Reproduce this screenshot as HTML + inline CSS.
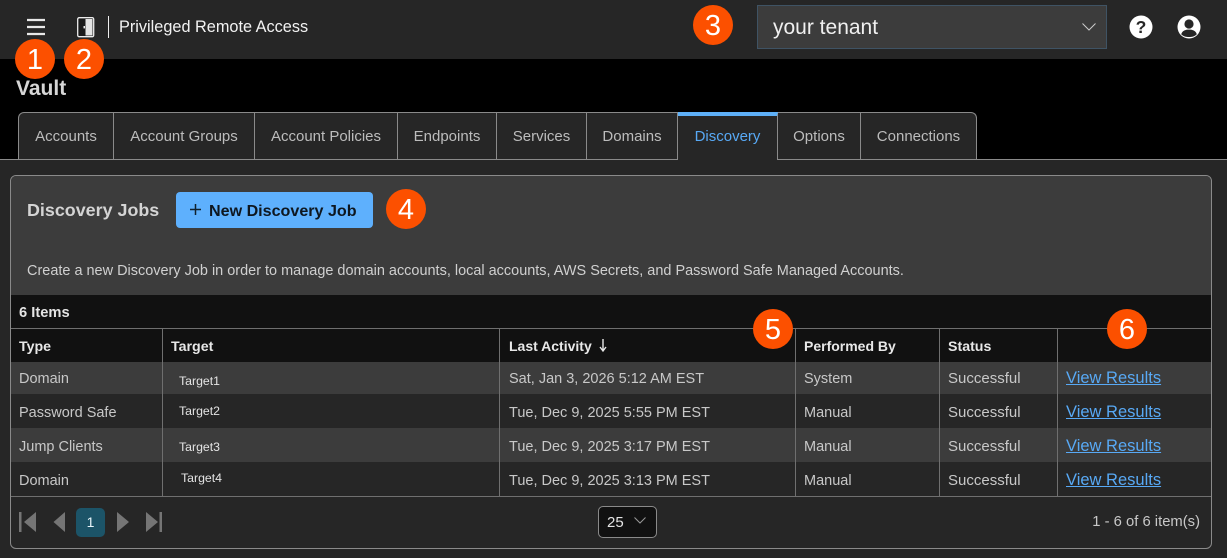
<!DOCTYPE html>
<html><head><meta charset="utf-8">
<style>
html,body{margin:0;padding:0;background:#262626}
#p{position:relative;width:1227px;height:558px;overflow:hidden;background:#262626;font-family:"Liberation Sans",sans-serif;font-size:14.5px;color:#c8c8c8}
#p div,#p a,#p svg{position:absolute}
.t{white-space:nowrap;line-height:18px}
.b{width:40px;height:40px;border-radius:50%;background:#fc5000;color:#fff;font-size:29px;line-height:43px;text-align:center}
.tab{top:112px;height:47px;box-sizing:border-box;border-top:1px solid #8a8a8a;border-right:1px solid #8a8a8a;background:#262626;color:#bcbcbc;line-height:47px;text-align:center;font-size:15px}
.vl{width:1px;background:#6f6f6f;top:329px;height:167px}
.th{font-weight:bold;color:#e8e8e8;font-size:14.2px}
.tg{color:#e4e4e4;font-size:12.3px}
.s{font-size:15px}
a.l{color:#58a9f5;text-decoration:underline;font-size:16.5px;left:1066px;white-space:nowrap;line-height:18px}
</style></head><body><div id="p">
<div style="left:0;top:0;width:1227px;height:59px;background:#262626"></div>
<div style="left:0;top:59px;width:1227px;height:100px;background:#000"></div>

<svg style="left:26px;top:18px" width="20" height="18"><path d="M1 2H19M1 9H19M1 16H19" stroke="#e8e8e8" stroke-width="2.2" fill="none"/></svg>
<svg style="left:76px;top:16px" width="20" height="22"><rect x="1.700" y="1.700" width="16" height="19" rx="1.500" fill="#1a1a1a" stroke="#ececec" stroke-width="1.300"/><path d="M9.500 3H16.500V19.500H9.500Z" fill="#e4e4e4"/><rect x="7.500" y="10" width="1.500" height="2.400" fill="#eee"/></svg>
<div style="left:108px;top:16px;width:1px;height:22px;background:#eee"></div>
<div class="t" style="left:119px;top:18px;color:#f2f2f2;font-size:16.3px">Privileged Remote Access</div>

<div style="left:757px;top:5px;width:350px;height:44px;box-sizing:border-box;background:#3c3c3c;border:1px solid #3f5364"></div>
<div class="t" style="left:773px;top:19px;color:#f0f0f0;font-size:21px">your tenant</div>
<svg style="left:1081px;top:21px" width="16" height="12"><path d="M1.500 2.500L8 9L14.500 2.500" stroke="#ccc" stroke-width="1" fill="none"/></svg>
<svg style="left:1129px;top:15px" width="24" height="24"><circle cx="12" cy="12" r="11.500" fill="#fff"/><text x="12" y="18.200" text-anchor="middle" font-family="Liberation Sans" font-weight="bold" font-size="17.500" fill="#262626">?</text></svg>
<svg style="left:1177px;top:15px" width="24" height="24"><circle cx="12" cy="12" r="11.500" fill="#fff"/><circle cx="12" cy="9" r="4.600" fill="#262626"/><path d="M4.200 19.200C5.500 15.400 8.500 14.600 12 14.600S18.500 15.400 19.800 19.200C17.500 21.400 15 22 12 22S6.500 21.400 4.200 19.200Z" fill="#262626"/></svg>

<div class="t" style="left:16px;top:78px;color:#d6d6d6;font-size:21px;font-weight:bold;line-height:22px">Vault</div>

<div style="left:0;top:159px;width:1227px;height:1px;background:#8a8a8a"></div>
<div class="tab" style="left:18px;width:96px;border-left:1px solid #8a8a8a;border-top-left-radius:6px;line-height:48px">Accounts</div>
<div class="tab" style="left:114px;width:141px;line-height:48px">Account Groups</div>
<div class="tab" style="left:255px;width:143px;line-height:48px">Account Policies</div>
<div class="tab" style="left:398px;width:99px;line-height:48px">Endpoints</div>
<div class="tab" style="left:497px;width:90px;line-height:48px">Services</div>
<div class="tab" style="left:587px;width:91px;line-height:48px">Domains</div>
<div class="tab" style="left:678px;width:100px;height:48px;color:#58a9f5;border-top:4px solid #5eb0f7;line-height:42px">Discovery</div>
<div class="tab" style="left:778px;width:83px;line-height:48px">Options</div>
<div class="tab" style="left:861px;width:116px;border-top-right-radius:6px;line-height:48px">Connections</div>

<div style="left:10px;top:175px;width:1202px;height:374px;box-sizing:border-box;border:1px solid #8a8a8a;border-radius:6px;background:#262626"></div>
<div style="left:11px;top:176px;width:1200px;height:119px;background:#3c3c3c;border-radius:5px 5px 0 0"></div>
<div class="t" style="left:27px;top:200px;color:#d4d4d4;font-size:17.900px;font-weight:bold;line-height:20px">Discovery Jobs</div>
<div style="left:176px;top:192px;width:197px;height:36px;background:#5eb0fd;border-radius:4px"></div>
<svg style="left:189px;top:203px" width="13" height="13"><path d="M6.500 1V12M1 6.500H12" stroke="#10202c" stroke-width="1.500"/></svg>
<div class="t" style="left:209px;top:202px;color:#0e1720;font-size:16.100px;font-weight:bold">New Discovery Job</div>
<div class="t" style="left:27px;top:262px;color:#d0d0d0;font-size:14.470px">Create a new Discovery Job in order to manage domain accounts, local accounts, AWS Secrets, and Password Safe Managed Accounts.</div>

<div style="left:11px;top:295px;width:1200px;height:67px;background:#111"></div>
<div style="left:11px;top:328px;width:1200px;height:1px;background:#6f6f6f"></div>
<div class="t" style="left:19px;top:304px;font-weight:bold;color:#e4e4e4;font-size:14.700px">6 Items</div>

<div style="left:11px;top:362px;width:1200px;height:32px;background:#3c3c3c"></div>
<div style="left:11px;top:394px;width:1200px;height:34px;background:#262626"></div>
<div style="left:11px;top:428px;width:1200px;height:34px;background:#3c3c3c"></div>
<div style="left:11px;top:462px;width:1200px;height:34px;background:#262626"></div>
<div style="left:11px;top:496px;width:1200px;height:1px;background:#6f6f6f"></div>
<div class="vl" style="left:162px"></div><div class="vl" style="left:499px"></div><div class="vl" style="left:795px"></div><div class="vl" style="left:939px"></div><div class="vl" style="left:1057px"></div>

<div class="t th" style="left:19px;top:338px">Type</div>
<div class="t th" style="left:171px;top:338px">Target</div>
<div class="t th" style="left:509px;top:337px;font-size:14px">Last Activity</div>
<svg style="left:598px;top:338px" width="10" height="15"><path d="M5 1V12M2 9L5 13L8 9" stroke="#e8e8e8" stroke-width="1.400" fill="none"/></svg>
<div class="t th" style="left:804px;top:337px;font-size:14px">Performed By</div>
<div class="t th" style="left:948px;top:338px">Status</div>

<div class="t" style="left:19px;top:370px">Domain</div><div class="t tg" style="left:179px;top:372px">Target1</div><div class="t" style="left:509px;top:370px">Sat, Jan 3, 2026 5:12 AM EST</div><div class="t" style="left:804px;top:370px">System</div><div class="t s" style="left:948px;top:370px">Successful</div><a class="l" style="top:369px">View Results</a>

<div class="t" style="left:19px;top:404px">Password Safe</div><div class="t tg" style="left:179px;top:402px">Target2</div><div class="t" style="left:509px;top:404px">Tue, Dec 9, 2025 5:55 PM EST</div><div class="t" style="left:804px;top:404px">Manual</div><div class="t s" style="left:948px;top:404px">Successful</div><a class="l" style="top:403px">View Results</a>

<div class="t" style="left:19px;top:438px">Jump Clients</div><div class="t tg" style="left:179px;top:438px">Target3</div><div class="t" style="left:509px;top:438px">Tue, Dec 9, 2025 3:17 PM EST</div><div class="t" style="left:804px;top:438px">Manual</div><div class="t s" style="left:948px;top:438px">Successful</div><a class="l" style="top:437px">View Results</a>

<div class="t" style="left:19px;top:472px">Domain</div><div class="t tg" style="left:181px;top:469px">Target4</div><div class="t" style="left:509px;top:472px">Tue, Dec 9, 2025 3:13 PM EST</div><div class="t" style="left:804px;top:472px">Manual</div><div class="t s" style="left:948px;top:472px">Successful</div><a class="l" style="top:471px">View Results</a>

<svg style="left:18px;top:510px" width="150" height="24" fill="#757575"><rect x="1" y="2" width="2.500" height="20"/><path d="M18 2V22L6 12Z"/><path d="M47 2V22L35.500 12Z"/><path d="M99 2V22L111 12Z"/><path d="M128 2V22L140 12Z"/><rect x="141.500" y="2" width="2.500" height="20"/></svg>
<div style="left:76px;top:508px;width:29px;height:29px;border-radius:5px;background:#1c5468;color:#e8f4fa;text-align:center;line-height:29px;font-size:14px">1</div>

<div style="left:598px;top:506px;width:59px;height:32px;box-sizing:border-box;border:1px solid #8a8a8a;border-radius:5px;background:#111"></div>
<div class="t" style="left:607px;top:514px;color:#e4e4e4;font-size:15px">25</div>
<svg style="left:633px;top:516px" width="14" height="10"><path d="M1.500 1.500L7 7L12.500 1.500" stroke="#999" stroke-width="1" fill="none"/></svg>
<div class="t" style="right:27px;top:513px;color:#c8c8c8;font-size:14.800px">1 - 6 of 6 item(s)</div>

<div class="b" style="left:15px;top:39px">1</div>
<div class="b" style="left:64px;top:39px">2</div>
<div class="b" style="left:693px;top:5px">3</div>
<div class="b" style="left:386px;top:189px">4</div>
<div class="b" style="left:753px;top:309px">5</div>
<div class="b" style="left:1107px;top:309px">6</div>
</div></body></html>
